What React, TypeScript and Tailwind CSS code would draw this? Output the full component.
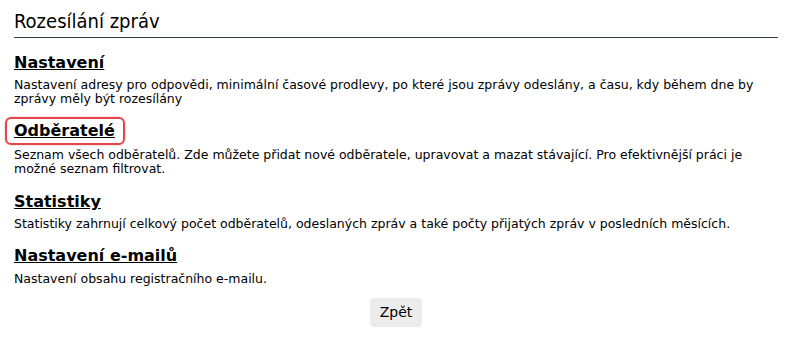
import React from 'react';

interface Section {
  title: string;
  text: string;
  headingGap: string;
  textGap: string;
  focused?: boolean;
}

const sections: Section[] = [
  {
    title: 'Nastavení',
    text: 'Nastavení adresy pro odpovědi, minimální časové prodlevy, po které jsou zprávy odeslány, a času, kdy během dne by zprávy měly být rozesílány',
    headingGap: 'mt-[15px]',
    textGap: 'mt-[5px]',
  },
  {
    title: 'Odběratelé',
    text: 'Seznam všech odběratelů. Zde můžete přidat nové odběratele, upravovat a mazat stávající. Pro efektivnější práci je možné seznam filtrovat.',
    headingGap: 'mt-[15px]',
    textGap: 'mt-[7px]',
    focused: true,
  },
  {
    title: 'Statistiky',
    text: 'Statistiky zahrnují celkový počet odběratelů, odeslaných zpráv a také počty přijatých zpráv v posledních měsících.',
    headingGap: 'mt-[16px]',
    textGap: 'mt-[5px]',
  },
  {
    title: 'Nastavení e-mailů',
    text: 'Nastavení obsahu registračního e-mailu.',
    headingGap: 'mt-[15px]',
    textGap: 'mt-[6px]',
  },
];

export default function App() {
  return (
    <div className="w-[791px] h-[340px] bg-white text-black font-['DejaVu_Sans',Verdana,sans-serif] px-[14px] pt-[9px] overflow-hidden">
      {/* Page title with rule underneath */}
      <h1 className="text-[20px] leading-6 font-normal font-['DejaVu_Sans_Condensed','DejaVu_Sans',sans-serif] pb-[4px] border-b border-[#2c3e50] w-[764px]">
        Rozesílání zpráv
      </h1>

      {sections.map((s) => (
        <div key={s.title}>
          <h2 className={`${s.headingGap} text-[16px] leading-5 font-bold`}>
            <a href="#" className="relative underline text-black">
              {s.title}
              {s.focused && (
                <span className="absolute left-[-9px] right-[-10px] top-[-4px] bottom-[-5px] border-2 border-[#e4464b] rounded-[6px] shadow-[0_0_2px_rgba(228,70,75,0.5)]" />
              )}
            </a>
          </h2>
          <p className={`${s.textGap} text-[12.5px] leading-[14px] pr-[10px]`}>{s.text}</p>
        </div>
      ))}

      <div className="flex justify-center w-[764px] mt-[12px]">
        <button className="h-[29px] px-[10px] bg-[#ececec] rounded-[4px] text-[14px] text-black">
          Zpět
        </button>
      </div>
    </div>
  );
}
